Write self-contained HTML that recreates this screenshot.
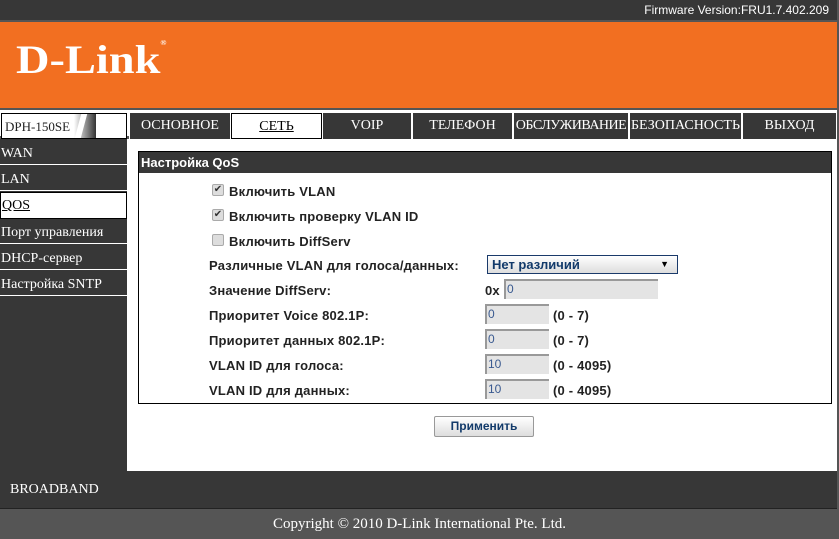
<!DOCTYPE html>
<html><head><meta charset="utf-8"><style>
*{margin:0;padding:0;box-sizing:border-box}
body{width:839px;height:537px;background:#555;position:relative;overflow:hidden;font-family:"Liberation Sans","DejaVu Sans",sans-serif}
.abs{position:absolute}
.serif{font-family:"Liberation Serif","DejaVu Serif",serif}
.top{left:0;top:0;width:837px;height:20px;background:#373737;color:#fff;font-size:12px;text-align:right;padding-right:8px;line-height:20px}
.org{left:0;top:22px;width:837px;height:86px;background:#f26f21}
.logo{left:16px;top:40px;color:#fff;font-family:"Liberation Serif",serif;font-weight:bold;font-size:40px;line-height:1;transform:scaleX(1.16);transform-origin:left top}
.nav{left:0;top:110px;width:837px;height:26px;background:#fff}
.tab{top:113px;height:26px;background:#373737;color:#fff;font-size:14px;text-align:center;line-height:25px;border:1px solid #fff;border-top:0;border-bottom:0}
.side{left:0;top:139px;width:127px;height:332px;background:#373737}
.si{left:0;width:127px;height:25px;color:#fff;font-size:14px;line-height:27px;padding-left:1px;border-bottom:1px solid #fff}
.main{left:127px;top:139px;width:710px;height:332px;background:#fff}
.box{left:138px;top:151px;width:694px;height:253px;border:1px solid #000;background:#fff}
.hd{left:0;top:0;width:692px;height:21px;background:#373737;color:#fff;font-weight:bold;font-size:13px;line-height:22px;padding-left:2px}
.l{font-weight:bold;font-size:13px;color:#222;letter-spacing:0.2px}
.cb{width:12px;height:12px;border:1px solid #aaa;border-radius:2px;background:#ddd;font-size:10px;line-height:10px;text-align:center;color:#333}
.in{height:20px;background:#e4e4e4;border-top:2px solid #999;border-left:2px solid #999;font-size:12px;color:#3a5a90;padding-left:1px;line-height:17px}
</style></head><body>
<div class="abs top">Firmware Version:FRU1.7.402.209</div>
<div class="abs org"></div>
<div class="abs logo">D-Link<span style="font-size:7px;vertical-align:top">®</span></div>
<div class="abs nav"></div>
<div class="abs" style="left:1px;top:113px;width:126px;height:26px;background:#fff;border:1px solid #000"></div>
<div class="abs serif" style="left:5px;top:119px;font-size:13px;color:#222">DPH-150SE</div>
<div class="abs" style="left:74px;top:114px;width:22px;height:24px;background:linear-gradient(90deg,#fff,#333)"></div>
<div class="abs" style="left:78px;top:114px;width:6px;height:24px;background:#fff;transform:skewX(-15deg)"></div>
<div class="abs tab serif" style="left:129px;width:102px">ОСНОВНОЕ</div>
<div class="abs tab serif" style="left:231px;width:91px;background:#fff;color:#000;border:1px solid #000;text-decoration:underline;line-height:26px">СЕТЬ</div>
<div class="abs tab serif" style="left:322px;width:90px">VOIP</div>
<div class="abs tab serif" style="left:412px;width:101px">ТЕЛЕФОН</div>
<div class="abs tab serif" style="left:513px;width:116px;letter-spacing:-0.5px">ОБСЛУЖИВАНИЕ</div>
<div class="abs tab serif" style="left:629px;width:113px">БЕЗОПАСНОСТЬ</div>
<div class="abs tab serif" style="left:742px;width:95px">ВЫХОД</div>
<div class="abs" style="left:127px;top:139px;width:710px;height:1px;background:#373737"></div>
<div class="abs side"></div>
<div class="abs si serif" style="top:140px">WAN</div>
<div class="abs si serif" style="top:166px">LAN</div>
<div class="abs si serif" style="top:192px;background:#fff;color:#000;border:1px solid #000;text-decoration:underline;height:27px;line-height:26px">QOS</div>
<div class="abs si serif" style="top:219px">Порт управления</div>
<div class="abs si serif" style="top:245px">DHCP-сервер</div>
<div class="abs si serif" style="top:271px">Настройка SNTP</div>
<div class="abs main"></div>
<div class="abs box"><div class="abs hd">Настройка QoS</div></div>
<div class="abs cb" style="left:212px;top:184px">✔</div><div class="abs l" style="left:229px;top:184px">Включить VLAN</div>
<div class="abs cb" style="left:212px;top:209px">✔</div><div class="abs l" style="left:229px;top:209px">Включить проверку VLAN ID</div>
<div class="abs cb" style="left:212px;top:234px"></div><div class="abs l" style="left:229px;top:234px">Включить DiffServ</div>
<div class="abs l" style="left:209px;top:258px">Различные VLAN для голоса/данных:</div>
<div class="abs" style="left:487px;top:255px;width:191px;height:19px;border:1px solid #1a3a6a;background:linear-gradient(#fff,#ddd);font-weight:bold;font-size:13px;color:#123a6a;padding-left:4px;line-height:17px">Нет различий<span style="position:absolute;right:8px;font-size:9px;color:#000">▼</span></div>
<div class="abs l" style="left:209px;top:283px">Значение DiffServ:</div>
<div class="abs l" style="left:485px;top:283px">0x</div>
<div class="abs in" style="left:504px;top:279px;width:154px">0</div>
<div class="abs l" style="left:209px;top:308px">Приоритет Voice 802.1P:</div>
<div class="abs in" style="left:485px;top:304px;width:64px">0</div><div class="abs l" style="left:553px;top:308px">(0 - 7)</div>
<div class="abs l" style="left:209px;top:333px">Приоритет данных 802.1P:</div>
<div class="abs in" style="left:485px;top:329px;width:64px">0</div><div class="abs l" style="left:553px;top:333px">(0 - 7)</div>
<div class="abs l" style="left:209px;top:358px">VLAN ID для голоса:</div>
<div class="abs in" style="left:485px;top:354px;width:64px">10</div><div class="abs l" style="left:553px;top:358px">(0 - 4095)</div>
<div class="abs l" style="left:209px;top:383px">VLAN ID для данных:</div>
<div class="abs in" style="left:485px;top:379px;width:64px">10</div><div class="abs l" style="left:553px;top:383px">(0 - 4095)</div>
<div class="abs" style="left:434px;top:416px;width:100px;height:21px;border:1px solid #999;border-radius:2px;background:linear-gradient(#fff,#ddd);font-weight:bold;font-size:12px;color:#123a6a;text-align:center;line-height:19px">Применить</div>
<div class="abs" style="left:0;top:471px;width:837px;height:38px;background:#373737;border-bottom:1px solid #222"></div>
<div class="abs serif" style="left:10px;top:482px;color:#fff;font-size:14px">BROADBAND</div>
<div class="abs serif" style="left:0;top:509px;width:839px;height:28px;background:#555;color:#fff;font-size:15px;text-align:center;line-height:30px">Copyright © 2010 D-Link International Pte. Ltd.</div>
</body></html>
